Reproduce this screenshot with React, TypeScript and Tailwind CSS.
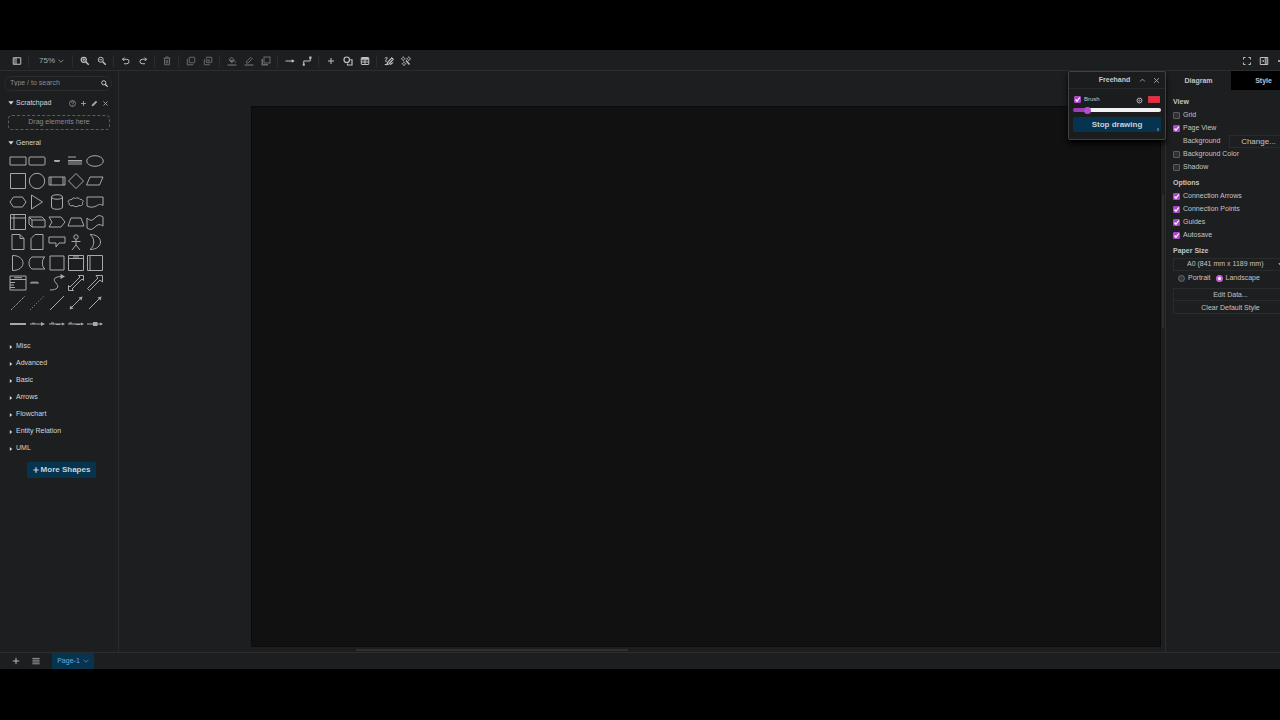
import type { ReactNode } from "react";

function Icon({ children, size = "size-[10px]" }: { children: ReactNode; size?: string }) {
  return (
    <svg viewBox="0 0 20 20" className={`${size} shrink-0`} fill="none" stroke="currentColor" strokeWidth="2" aria-hidden="true">
      {children}
    </svg>
  );
}

function ToolButton({ label, dim, children }: { label: string; dim?: boolean; children: ReactNode }) {
  return (
    <button
      type="button"
      aria-label={label}
      className={`flex h-full w-[17px] shrink-0 items-center justify-center ${dim ? "text-[#68696a]" : "text-[#c0c0c0]"}`}
    >
      <Icon>{children}</Icon>
    </button>
  );
}

function Separator() {
  return (
    <span className="flex w-[7px] shrink-0 justify-center">
      <span className="h-3 w-px bg-[#2a2c2e]" />
    </span>
  );
}

function Toolbar() {
  return (
    <header className="flex h-[21px] shrink-0 items-center border-b border-[#2b2d2f] pt-[2px] pl-2">
      <ToolButton label="Toggle shapes">
        <path d="M2.500 3.500h15v13h-15zM8 3.500v13" />
        <path d="M5 4v12" strokeWidth="1" />
      </ToolButton>
      <Separator />
      <button type="button" className="flex w-[37px] items-center justify-between pr-[5px] pl-[7px] font-['Liberation_Sans',sans-serif] text-[8px] text-[#a9a9a9]">
        75%
        <Icon size="size-[6px]">
          <path d="M2 6l8 8 8-8" strokeWidth="2.500" />
        </Icon>
      </button>
      <Separator />
      <ToolButton label="Zoom in">
        <circle cx="7.500" cy="7.500" r="5" strokeWidth="2.500" />
        <path d="M11.500 11.500l6 6" strokeWidth="3" />
        <path d="M5 7.500h5M7.500 5v5" strokeWidth="1.800" />
      </ToolButton>
      <ToolButton label="Zoom out">
        <circle cx="7.500" cy="7.500" r="5" strokeWidth="2" />
        <path d="M11.500 11.500l6 6" strokeWidth="3" />
        <path d="M5 7.500h5" strokeWidth="1.800" />
      </ToolButton>
      <Separator />
      <ToolButton label="Undo">
        <path d="M6.500 3L3 6.500 6.500 10M3 6.500h8.500a4.500 4.500 0 010 9H6" />
      </ToolButton>
      <ToolButton label="Redo">
        <path d="M13.500 3L17 6.500 13.500 10M17 6.500H8.500a4.500 4.500 0 000 9H14" />
      </ToolButton>
      <Separator />
      <ToolButton label="Delete" dim>
        <path d="M3 4.500h14M7.500 4V2h5v2M5 5v12.500h10V5M8.500 8v7M11.500 8v7" />
      </ToolButton>
      <Separator />
      <ToolButton label="To front" dim>
        <rect x="6.500" y="2.500" width="11" height="11" rx="1" />
        <path d="M4 6.500H2.500v11h11V16" />
      </ToolButton>
      <ToolButton label="To back" dim>
        <path d="M7 5.500v-3h10.500v10.500h-3" />
        <path d="M5 7.500H2.500v10h10V15M7 13V8h5.500v5z" />
      </ToolButton>
      <Separator />
      <ToolButton label="Fill color" dim>
        <path d="M9 2l6 6-5.500 5.500L4 8z" />
        <path d="M5 8.500h9l-4.500 4.500z" fill="currentColor" />
        <path d="M16.500 10.500v3" />
        <path d="M1 18h18" strokeWidth="2.500" />
      </ToolButton>
      <ToolButton label="Line color" dim>
        <path d="M5 14v-3l8.500-8.500 3 3L8 14z" />
        <path d="M1 18h18" strokeWidth="2.500" />
      </ToolButton>
      <ToolButton label="Shadow" dim>
        <rect x="6" y="2" width="12" height="12" />
        <path d="M2.500 6v11.500H14" strokeWidth="3" />
      </ToolButton>
      <Separator />
      <ToolButton label="Connection">
        <path d="M1 10h14" />
        <path d="M13.500 6.500l6 3.500-6 3.500z" fill="currentColor" stroke="none" />
      </ToolButton>
      <ToolButton label="Waypoints">
        <path d="M3.500 17v-7h13V3" />
        <path d="M1.500 15h4v4.500h-4zM14.500 1h4.500v4.500h-4.500z" fill="currentColor" stroke="none" />
      </ToolButton>
      <Separator />
      <ToolButton label="Insert">
        <path d="M10 4v12M4 10h12" />
      </ToolButton>
      <ToolButton label="Shapes">
        <circle cx="7.500" cy="7.500" r="5.500" strokeWidth="2.400" />
        <path d="M14.500 7.500h3.500v10.500H9v-3" strokeWidth="2.400" />
      </ToolButton>
      <ToolButton label="Table">
        <rect x="2.500" y="3" width="15" height="14" rx="1" />
        <path d="M2.500 7.500h15M2.500 12h15M10 7v10" />
        <path d="M3 5h14" strokeWidth="2.500" />
      </ToolButton>
      <Separator />
      <ToolButton label="Freehand">
        <path d="M1.500 5c4-3.500 6.500-2.500 4 1s-4 6 0 4.500" />
        <path d="M6 17l1-4 8.500-9.500 3 3L10 16zM1.500 17H6M12 17c3 0 3-4 6.500-3.500" strokeWidth="2.400" />
      </ToolButton>
      <ToolButton label="Generate">
        <path d="M4.500 1l1.300 3.200L9 5.500 5.800 6.800 4.500 10 3.200 6.800 0 5.500l3.200-1.300zM15.500 1l1.300 3.200L20 5.500l-3.200 1.300L15.500 10l-1.300-3.200L11 5.500l3.200-1.300zM6 11l1.300 3.200 3.200 1.300-3.200 1.300L6 20l-1.300-3.200-3.200-1.300 3.200-1.300z" strokeWidth="1.200" />
        <path d="M10 9l7 8" strokeWidth="3" />
      </ToolButton>
      <div className="ml-auto flex h-full items-center">
        <ToolButton label="Fullscreen">
          <path d="M3 7V3h4M13 3h4v4M17 13v4h-4M7 17H3v-4" />
        </ToolButton>
        <ToolButton label="Format">
          <path d="M2.500 3h15v14h-15zM12.500 3v14" />
          <path d="M15.500 4v12M5 10h5M7.500 7.500L10 10l-2.500 2.500" strokeWidth="1.400" />
        </ToolButton>
        <button type="button" aria-label="Theme" className="flex w-2 justify-end overflow-hidden text-[#c9c9c9]">
          <svg viewBox="0 0 4 4" className="h-1 w-0.5" fill="currentColor" aria-hidden="true">
            <circle cx="2" cy="2" r="2" />
          </svg>
        </button>
      </div>
    </header>
  );
}

const shapes: [string, ReactNode][] = [
  ["Rectangle", <path d="M2 6h16v8H2z" />],
  ["Rounded rectangle", <rect x="2" y="6" width="16" height="8" rx="1" />],
  ["Text", <path d="M7 9.500h6M7.500 10.500h5" />],
  ["Text box", <path d="M2 6h8M2 9.500h14M2 11h14M2 13h14" />],
  ["Ellipse", <ellipse cx="10" cy="10" rx="8.300" ry="5.300" />],
  ["Square", <path d="M2.500 2.500h15v15h-15z" />],
  ["Circle", <circle cx="10" cy="10" r="7.700" />],
  ["Process", <path d="M2 6h16v8H2zM4 6v8M16 6v8" />],
  ["Diamond", <path d="M10 2.500l7.500 7.500-7.500 7.500L2.500 10z" />],
  ["Parallelogram", <path d="M5 6h13l-3.500 8h-13z" />],
  ["Hexagon", <path d="M5.500 5h9l3.500 5-3.500 5h-9L2 10z" />],
  ["Triangle", <path d="M4.500 3l11 7-11 7z" />],
  ["Cylinder", <path d="M4.500 5v10c0 3 11 3 11 0V5c0-3-11-3-11 0c0 3 11 3 11 0" />],
  ["Cloud", <path d="M6 7.500c-4 0-5 2.500-2.500 3.500-1.500 2 1.500 3.500 3.500 2.500 1.500 1.500 5 1.500 6 0 3 .500 5-1 3-2.500 2.500-1.500.500-4-2-3.500-1-2-3.500-2-4.500-1-1.500-1-3.500-.500-3.500 1z" />],
  ["Document", <path d="M2 5h16v8.500c-4-2.500-5 0-8 1s-5 1-8-.500z" />],
  ["Internal storage", <path d="M2.500 2.500h15v15h-15zM6 2.500v15M2.500 6h15" />],
  ["Cube", <path d="M2 5h13l3 3v7H5l-3-3zM2 5l3 3h13M5 8v7" />],
  ["Step", <path d="M2 5h12l4 5-4 5H2l3-5z" />],
  ["Trapezoid", <path d="M5 6h10l3 8H2z" />],
  ["Tape", <path d="M2 6c3 3 5 3 8 0s5-3 8-1v9c-3-2-5-2-8 1s-5 3-8 1z" />],
  ["Note", <path d="M4 2.500h8l4 4v11H4zM12 2.500v4h4" />],
  ["Card", <path d="M8 2.500h8v15H4v-11z" />],
  ["Callout", <path d="M2 5h16v6h-6l-3 4v-4H2z" />],
  ["Actor", <><circle cx="10" cy="5" r="2.200" /><path d="M10 7.200v5.800M5.500 9.500h9M10 13l-4 5M10 13l4 5" /></>],
  ["Or", <path d="M5 2.500c14 0 14 15 0 15 5-3 5-12 0-15z" />],
  ["And", <path d="M4.500 2.500c14 0 14 15 0 15z" />],
  ["Data storage", <path d="M5 4h13c-3.500 2-3.500 10 0 12H5C1 14 1 6 5 4z" />],
  ["Container", <path d="M3 3h14v14H3z" />],
  ["Vertical container", <path d="M2.500 2.500h15v15h-15zM2.500 5.500h15M7 4h6" />],
  ["Horizontal container", <path d="M2.500 2.500h15v15h-15zM5 2.500v15" />],
  ["List", <path d="M2 3h16v14H2zM2 6.500h16M6 4.700h8M2 9.500h5M2 12h4M2 14.500h5" />],
  ["List item", <path d="M3 10h9M4 9.200h7" />],
  ["Curve", <><path d="M3 17c7 0 10-3 6-7s-1-6.500 6-6.500" /><path d="M13.500 1l4.500 2.500-4.500 2.500z" fill="currentColor" stroke="none" /></>],
  ["Bidirectional arrow", <path d="M2.500 17.500v-5l1.500 1.500L14 4l-1.500-1.500h5v5L16 6 6 16l1.500 1.500z" />],
  ["Arrow", <path d="M2.500 15.500L13 5l-2-2.500h6.500V9L15 7 4.500 17.500z" />],
  ["Dashed line", <path d="M3 17L17 3" strokeDasharray="1.500 .7" />],
  ["Dotted line", <path d="M3 17L17 3" strokeDasharray="1 2" />],
  ["Line", <path d="M3 17L17 3" />],
  ["Bidirectional connector", <><path d="M5 15L15 5" /><path d="M3.500 16.500l1-4 3 3zM16.500 3.500l-1 4-3-3z" fill="currentColor" stroke="none" /></>],
  ["Directional connector", <><path d="M4 16L15 5" /><path d="M16.500 3.500l-1 4-3-3z" fill="currentColor" stroke="none" /></>],
  ["Link", <path d="M2 9.500h16M2 10.500h16" />],
  ["Labeled link", <><path d="M3 10h13M5 9.300h3" /><path d="M14 8l4 2-4 2z" fill="currentColor" stroke="none" /></>],
  ["Labeled connector", <><path d="M2 10h14M4 9h3M9 10.500h4" /><path d="M15 8.500l3 1.500-3 1.500z" fill="currentColor" stroke="none" /></>],
  ["Double labeled connector", <><path d="M2 10h14M3 9h3M10 10.500h4" /><path d="M15 8.500l3 1.500-3 1.500z" fill="currentColor" stroke="none" /></>],
  ["Symbol connector", <><path d="M2 10h15" /><path d="M8 8h4.500v4H8zM15 8.500l3 1.500-3 1.500z" fill="currentColor" stroke="none" /></>],
];

const categories = ["Misc", "Advanced", "Basic", "Arrows", "Flowchart", "Entity Relation", "UML"];

function Sidebar() {
  return (
    <aside className="flex w-[119px] shrink-0 flex-col border-r border-[#292b2d] text-[7px] text-[#d6d6d6]">
      <div className="mt-[5px] mr-[6px] ml-1 flex h-[15px] shrink-0 items-center rounded-full border border-[#2a2c2e] pr-[3px] pl-[5px]">
        <input
          type="text"
          aria-label="Search shapes"
          placeholder="Type / to search"
          className="w-0 grow bg-transparent text-[7px] outline-none placeholder:text-[#8b8b8b]"
        />
        <button type="button" aria-label="Search">
          <Icon size="size-[7px]">
            <circle cx="8" cy="8" r="6" strokeWidth="2.500" />
            <path d="M12 12l7 7" strokeWidth="3.500" />
          </Icon>
        </button>
      </div>
      <div className="mt-0.5 flex h-5 shrink-0 items-center pr-[9px] pl-2">
        <button type="button" className="flex grow items-center gap-0.5">
          <Icon size="size-[6px]">
            <path d="M1 4h18l-9 11z" fill="currentColor" stroke="none" />
          </Icon>
          Scratchpad
        </button>
        <div className="flex gap-1 text-[#a5a5a5]">
          <button type="button" aria-label="Help">
            <Icon size="size-[7px]">
              <circle cx="10" cy="10" r="8.500" />
              <path d="M7 8c0-4 6-4 6-.500 0 2-3 2-3 4.500M10 14v2" />
            </Icon>
          </button>
          <button type="button" aria-label="Add">
            <Icon size="size-[7px]">
              <path d="M10 3v14M3 10h14" strokeWidth="2.500" />
            </Icon>
          </button>
          <button type="button" aria-label="Edit">
            <Icon size="size-[7px]">
              <path d="M2 18l1-5L14 2l4 4L7 17z" fill="currentColor" stroke="none" />
            </Icon>
          </button>
          <button type="button" aria-label="Close">
            <Icon size="size-[7px]">
              <path d="M4 4l12 12M16 4L4 16" strokeWidth="2.500" />
            </Icon>
          </button>
        </div>
      </div>
      <div className="mx-2 mt-0.5 flex h-[15px] shrink-0 items-center justify-center rounded-[4px] border border-dashed border-[#5c5c5c] text-[#8b8b8b]">
        Drag elements here
      </div>
      <button type="button" className="mt-[5px] flex h-4 shrink-0 items-center gap-0.5 pl-2">
        <Icon size="size-[6px]">
          <path d="M1 4h18l-9 11z" fill="currentColor" stroke="none" />
        </Icon>
        General
      </button>
      <div className="mr-[13px] ml-2 grid h-[183px] shrink-0 grid-cols-5 grid-rows-9">
        {shapes.map(([label, drawing]) => (
          <button key={label} type="button" aria-label={label} className="flex items-center justify-center text-[#a8a8a8]">
            <svg viewBox="0 0 20 20" className="size-5 shrink-0" fill="none" stroke="currentColor" strokeWidth="1" aria-hidden="true">
              {drawing}
            </svg>
          </button>
        ))}
      </div>
      <nav className="mt-1 flex flex-col">
        {categories.map((name) => (
          <button key={name} type="button" className="flex h-[17px] items-center gap-0.5 pl-2">
            <Icon size="size-[6px]">
              <path d="M6 3l8 7-8 7z" fill="currentColor" stroke="none" />
            </Icon>
            {name}
          </button>
        ))}
      </nav>
      <button
        type="button"
        className="mt-[5px] ml-[27px] flex h-4 w-[69px] shrink-0 items-center justify-center gap-0.5 rounded-[2px] bg-[#06344f] text-[8px] font-bold text-[#c6d2da]"
      >
        <Icon size="size-[6px]">
          <path d="M10 1v18M1 10h18" strokeWidth="4" />
        </Icon>
        More Shapes
      </button>
    </aside>
  );
}

function Check({ label, checked }: { label: string; checked?: boolean }) {
  return (
    <label className="flex h-[13px] items-center gap-[3px]">
      <span className="relative flex size-[7px]">
        <input
          type="checkbox"
          defaultChecked={checked}
          className="peer size-[7px] appearance-none rounded-[1px] border border-[#5c5c5c] bg-[#303133] checked:border-[#ab47c8] checked:bg-[#ab47c8]"
        />
        <svg
          viewBox="0 0 14 14"
          className="pointer-events-none absolute inset-0 hidden size-[7px] peer-checked:block"
          fill="none"
          stroke="#fff"
          strokeWidth="2.500"
          aria-hidden="true"
        >
          <path d="M3 7l3 3.500L11.500 3" />
        </svg>
      </span>
      {label}
    </label>
  );
}

function Orientation({ label, checked }: { label: string; checked?: boolean }) {
  return (
    <label className="flex items-center gap-[3px]">
      <input
        type="radio"
        name="orientation"
        defaultChecked={checked}
        className="size-[7px] appearance-none rounded-full border border-[#6b6b6b] bg-[#36373a] checked:border-2 checked:border-[#c45fe0] checked:bg-white"
      />
      {label}
    </label>
  );
}

function FormatPanel() {
  return (
    <aside className="w-[115px] shrink-0 overflow-hidden border-l border-[#2b2d2f] text-[7px] text-[#c4c4c4]">
      <div className="w-[130px]">
        <div className="grid h-[19px] grid-cols-2 font-bold">
          <button type="button" className="pt-0.5">Diagram</button>
          <button type="button" className="bg-black pt-0.5">Style</button>
        </div>
        <div className="flex flex-col pr-2 pl-[7px]">
          <h2 className="mt-[5px] flex h-[14px] items-center font-bold">View</h2>
          <Check label="Grid" />
          <Check label="Page View" checked />
          <div className="flex h-[13px] items-center justify-between pl-[10px]">
            Background
            <button type="button" className="h-[13px] w-[59px] border border-[#292b2d] text-[8px] leading-[11px]">
              Change...
            </button>
          </div>
          <Check label="Background Color" />
          <Check label="Shadow" />
          <h2 className="mt-[2px] flex h-[14px] items-center font-bold">Options</h2>
          <Check label="Connection Arrows" checked />
          <Check label="Connection Points" checked />
          <Check label="Guides" checked />
          <Check label="Autosave" checked />
          <h2 className="mt-[2px] flex h-[14px] items-center font-bold">Paper Size</h2>
          <div className="flex h-[13px] items-center border border-[#292b2d]">
            <select
              aria-label="Paper size"
              className="w-[104px] appearance-none bg-transparent pl-[13px] text-[7px] outline-none"
            >
              <option>A0 (841 mm x 1189 mm)</option>
            </select>
            <Icon size="size-[5px]">
              <path d="M1 5h18l-9 10z" fill="currentColor" stroke="none" />
            </Icon>
          </div>
          <div className="flex h-[14px] items-center gap-[5px] pl-[5px]">
            <Orientation label="Portrait" />
            <Orientation label="Landscape" checked />
          </div>
          <button type="button" className="mt-[3px] h-[13px] border border-[#292b2d] leading-[11px]">
            Edit Data...
          </button>
          <button type="button" className="h-[13px] border border-t-0 border-[#292b2d] leading-[11px]">
            Clear Default Style
          </button>
        </div>
      </div>
    </aside>
  );
}

function FreehandWindow() {
  return (
    <section className="absolute top-0 -right-px z-10 flex h-[69px] w-[98px] flex-col rounded-[2px] border border-[#3f4143] bg-[#1b1c1e] px-1 text-[#c8c8c8] shadow-md shadow-black">
      <div className="-mx-1 flex h-[17px] shrink-0 items-center gap-[7px] border-b border-[#28292b] pr-[5px]">
        <h2 className="grow pl-7 text-center text-[7px] font-bold">Freehand</h2>
        <button type="button" aria-label="Collapse">
          <Icon size="size-[7px]">
            <path d="M3 13l7-7 7 7" />
          </Icon>
        </button>
        <button type="button" aria-label="Close window">
          <Icon size="size-[7px]">
            <path d="M3 3l14 14M17 3L3 17" />
          </Icon>
        </button>
      </div>
      <div className="mt-1 flex h-[13px] shrink-0 items-center pl-px text-[6px]">
        <Check label="Brush" checked />
        <button type="button" aria-label="Brush settings" className="mt-0.5 ml-auto">
          <Icon size="size-[7px]">
            <circle cx="10" cy="10" r="7" strokeWidth="2.500" />
            <circle cx="10" cy="10" r="2" />
          </Icon>
        </button>
        <button type="button" aria-label="Brush color" className="mr-px ml-[5px] h-[7px] w-3 border border-[#c23a49] bg-[#f5283c]" />
      </div>
      <input
        type="range"
        aria-label="Brush size"
        defaultValue={13}
        className="mt-[2px] h-1 w-full shrink-0 appearance-none rounded-full bg-[linear-gradient(to_right,#9a3fb4_15%,#f1f1f1_15%)] [&::-webkit-slider-thumb]:size-[7px] [&::-webkit-slider-thumb]:appearance-none [&::-webkit-slider-thumb]:rounded-full [&::-webkit-slider-thumb]:bg-[#b14fcd]"
      />
      <button
        type="button"
        className="mt-[5px] h-[15px] shrink-0 rounded-[2px] bg-[#06344f] text-[8px] leading-[15px] font-bold text-[#c6d2da]"
      >
        Stop drawing
      </button>
      <span className="absolute right-1.5 bottom-2 h-[3px] w-0.5 bg-[#467089]" />
    </section>
  );
}

export default function App() {
  return (
    <div className="flex h-screen flex-col overflow-hidden bg-black pt-[50px] pb-[51px] font-['Liberation_Sans',sans-serif]">
      <div className="flex min-h-0 grow flex-col bg-[#1d1e20]">
        <Toolbar />
        <div className="flex min-h-0 grow">
          <Sidebar />
          <main className="relative flex min-w-0 grow flex-col pt-[35px] pl-[132px]">
            <div className="flex min-h-0 grow">
              <div className="grow border border-[#0c0c0c] bg-[#111]" />
              <div className="w-1 shrink-0 pt-[89px]">
                <div className="ml-px h-[133px] w-0.5 bg-[#2b2d2f]" />
              </div>
            </div>
            <div className="flex h-[5px] shrink-0 items-center pl-[105px]">
              <div className="h-0.5 w-[272px] bg-[#2e3032]" />
            </div>
            <FreehandWindow />
          </main>
          <FormatPanel />
        </div>
        <footer className="flex h-[17px] shrink-0 items-center border-t border-[#2b2d2f] pl-[11px] text-[#b8b8b8]">
          <button type="button" aria-label="Insert page" className="flex w-[10px] justify-center">
            <Icon size="size-2">
              <path d="M10 2v16M2 10h16" strokeWidth="2.500" />
            </Icon>
          </button>
          <button type="button" aria-label="Pages" className="ml-[10px] flex w-[10px] justify-center">
            <Icon size="size-2">
              <path d="M1 3.500h18M1 8h18M1 12.500h18M1 17h18" />
            </Icon>
          </button>
          <button
            type="button"
            className="ml-[11px] flex h-full w-[42px] items-center justify-center gap-[3px] bg-[#06344f] text-[7px] text-[#6aa9e0]"
          >
            Page-1
            <Icon size="size-[6px]">
              <path d="M2 6l8 8 8-8" />
            </Icon>
          </button>
        </footer>
      </div>
    </div>
  );
}
